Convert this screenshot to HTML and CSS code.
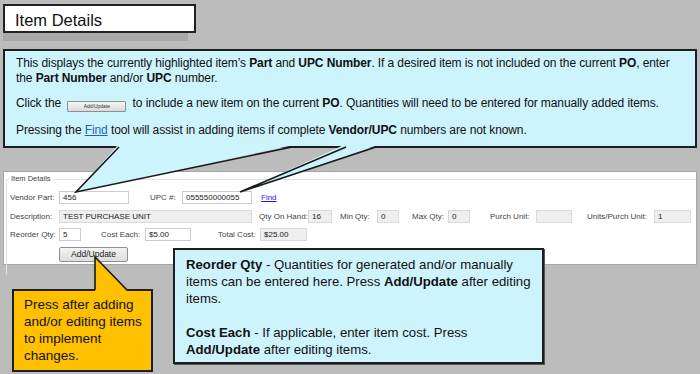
FILE: index.html
```html
<!DOCTYPE html>
<html>
<head>
<meta charset="utf-8">
<link rel="stylesheet" href="styles.css">
</head>
<body>
<div class="page">
  <div class="title">Item Details</div>

  <div class="panel">
    <fieldset class="group">
      <legend>Item Details</legend>
      <div class="row first">
        <span class="lbl w49">Vendor Part:</span>
        <span class="inp w70">456</span>
        <span class="lbl ml21 w32">UPC #:</span>
        <span class="inp w70">055550000055</span>
        <a class="find">Find</a>
      </div>
      <div class="row r2">
        <span class="lbl w49">Description:</span>
        <span class="inp ro w193">TEST PURCHASE UNIT</span>
        <span class="lbl ml7 w49">Qty On Hand:</span>
        <span class="inp ro w24">16</span>
        <span class="lbl ml8 w37">Min Qty:</span>
        <span class="inp ro w22">0</span>
        <span class="lbl ml13 w36">Max Qty:</span>
        <span class="inp ro w22">0</span>
        <span class="lbl ml20 w46">Purch Unit:</span>
        <span class="inp ro w36"></span>
        <span class="lbl ml15 w67">Units/Purch Unit:</span>
        <span class="inp ro w37">1</span>
      </div>
      <div class="row r3">
        <span class="lbl w49">Reorder Qty:</span>
        <span class="inp w22">5</span>
        <span class="lbl ml20 w44">Cost Each:</span>
        <span class="inp w46">$5.00</span>
        <span class="lbl ml27 w42">Total Cost:</span>
        <span class="inp ro w47">$25.00</span>
      </div>
      <div class="btn">Add/Update</div>
    </fieldset>
  </div>

  <div class="callout main">
    <p>This displays the currently highlighted item’s <b>Part</b> and <b>UPC Number</b>. If a desired item is not included on the current <b>PO</b>, enter<br>the <b>Part Number</b> and/or <b>UPC</b> number.</p>
    <p class="p2">Click the <span class="mini-btn">Add/Update</span> to include a new item on the current <b>PO</b>. Quantities will need to be entered for manually added items.</p>
    <p class="p3">Pressing the <a class="link">Find</a> tool will assist in adding items if complete <b>Vendor/UPC</b> numbers are not known.</p>
  </div>

  <div class="callout yellow">
    <p>Press after adding and/or editing items to implement changes.</p>
  </div>

  <div class="callout qty">
    <p><b>Reorder Qty</b> - Quantities for generated and/or manually items can be entered here. Press <b>Add/Update</b> after editing items.</p>
    <p class="gap"><b>Cost Each</b> - If applicable, enter item cost. Press <b>Add/Update</b> after editing items.</p>
  </div>

  <svg class="tails" width="700" height="374" viewBox="0 0 700 374">
    <polygon points="118,145 76,192 294,145" fill="#cdf3fd"/>
    <polyline points="119,147 76,192 292,147" fill="none" stroke="#1a1a1a" stroke-width="1.6"/>
    <polygon points="344,145 240,192 378,145" fill="#cdf3fd"/>
    <polyline points="346,147 240,192 376,147" fill="none" stroke="#1a1a1a" stroke-width="1.6"/>
    <polygon points="95,257 95,292 128,292" fill="#ffc000"/>
    <polyline points="95,290 95,257 127,290" fill="none" stroke="#1a1a1a" stroke-width="1.6"/>
  </svg>
</div>
</body>
</html>
```

FILE: styles.css
```css
* { box-sizing: border-box; }
html, body { margin: 0; padding: 0; }
body {
  background: #bcbcbc;
  font-family: "Liberation Sans", Arial, sans-serif;
  color: #111;
}
.page {
  position: relative;
  width: 700px;
  height: 374px;
  overflow: hidden;
  padding-top: 4px;
}
.title {
  margin-left: 3px;
  width: 193px;
  height: 29px;
  background: #fff;
  border: 2px solid #222;
  box-shadow: -4px 12px 0 -4px #a9a9a9;
  font-size: 16.5px;
  line-height: 28px;
  padding-left: 10px;
  color: #111;
}
.panel {
  margin: 138px 0 0 3px;
  width: 694px;
  height: 94px;
  background: #fff;
  border: 1px solid #a6a6a6;
  padding: 2px 0 0 2px;
}
.group {
  margin: 0;
  padding: 0 0 0 3px;
  border: 1px solid #dde3e8;
  border-right: none;
  border-bottom: none;
  min-width: 0;
  height: 100px;
}
.group legend {
  font-size: 7.5px;
  line-height: 10px;
  padding: 0 2px;
  margin-left: -1px;
  color: #444;
}
.row {
  display: flex;
  align-items: center;
  height: 13px;
  font-size: 8px;
  color: #444;
}
.row.first { margin-top: 7px; }
.row.r2 { margin-top: 6px; }
.row.r3 { margin-top: 5px; }
.lbl { flex: none; white-space: nowrap; }
.inp {
  flex: none;
  height: 13px;
  border: 1px solid #c9cdd2;
  background: #fff;
  color: #222;
  padding-left: 3px;
  line-height: 11px;
  white-space: nowrap;
  overflow: hidden;
}
.inp.ro { background: #efefef; border-color: #d9d9d9; }
.find {
  margin-left: 9px;
  color: #1a1ae6;
  text-decoration: underline;
}
.w22 { width: 22px; } .w24 { width: 24px; } .w32 { width: 32px; }
.w36 { width: 36px; } .w37 { width: 37px; } .w42 { width: 42px; }
.w44 { width: 44px; } .w46 { width: 46px; } .w47 { width: 47px; }
.w49 { width: 49px; } .w67 { width: 67px; } .w70 { width: 70px; }
.w193 { width: 193px; }
.ml7 { margin-left: 7px; } .ml8 { margin-left: 8px; } .ml13 { margin-left: 13px; }
.ml15 { margin-left: 15px; } .ml20 { margin-left: 20px; } .ml21 { margin-left: 21px; }
.ml27 { margin-left: 27px; }
.btn {
  margin: 6px 0 0 49px;
  width: 69px;
  height: 15px;
  border: 1px solid #8e8f8f;
  border-radius: 2px;
  background: linear-gradient(#f4f4f4, #dcdcdc);
  font-size: 8.5px;
  line-height: 13px;
  text-align: center;
  color: #222;
}

.callout {
  position: absolute;
  border: 2px solid #1e1e1e;
  color: #111;
}
.callout p { margin: 0; }
.main {
  left: 3px;
  top: 49px;
  width: 694px;
  height: 99px;
  background: #cdf3fd;
  font-size: 12px;
  letter-spacing: -0.1px;
  line-height: 15px;
  padding: 5px 2px 0 11px;
}
.main .p2 { margin-top: 10px; }
.main .p3 { margin-top: 11px; }
.mini-btn {
  display: inline-block;
  width: 59px;
  height: 11px;
  border: 1px solid #8e8f8f;
  border-radius: 1px;
  background: linear-gradient(#f7f7f7, #dadada);
  font-size: 5px;
  letter-spacing: 0;
  line-height: 9px;
  text-align: center;
  vertical-align: -1px;
  margin: 0 3px;
  color: #333;
}
.link { color: #1f5fc0; text-decoration: underline; }
.yellow {
  left: 12px;
  top: 289px;
  width: 141px;
  height: 83px;
  background: #ffc000;
  font-size: 13.5px;
  line-height: 17px;
  padding: 5px 2px 0 10px;
}
.qty {
  left: 173px;
  top: 248px;
  width: 371px;
  height: 116px;
  background: #cdf3fd;
  font-size: 13.2px;
  line-height: 17px;
  padding: 6px 0 0 11px;
  box-shadow: 1px 1px 0 #555;
}
.qty .gap { margin-top: 17px; }
.tails {
  position: absolute;
  left: 0;
  top: 0;
  pointer-events: none;
}
```
